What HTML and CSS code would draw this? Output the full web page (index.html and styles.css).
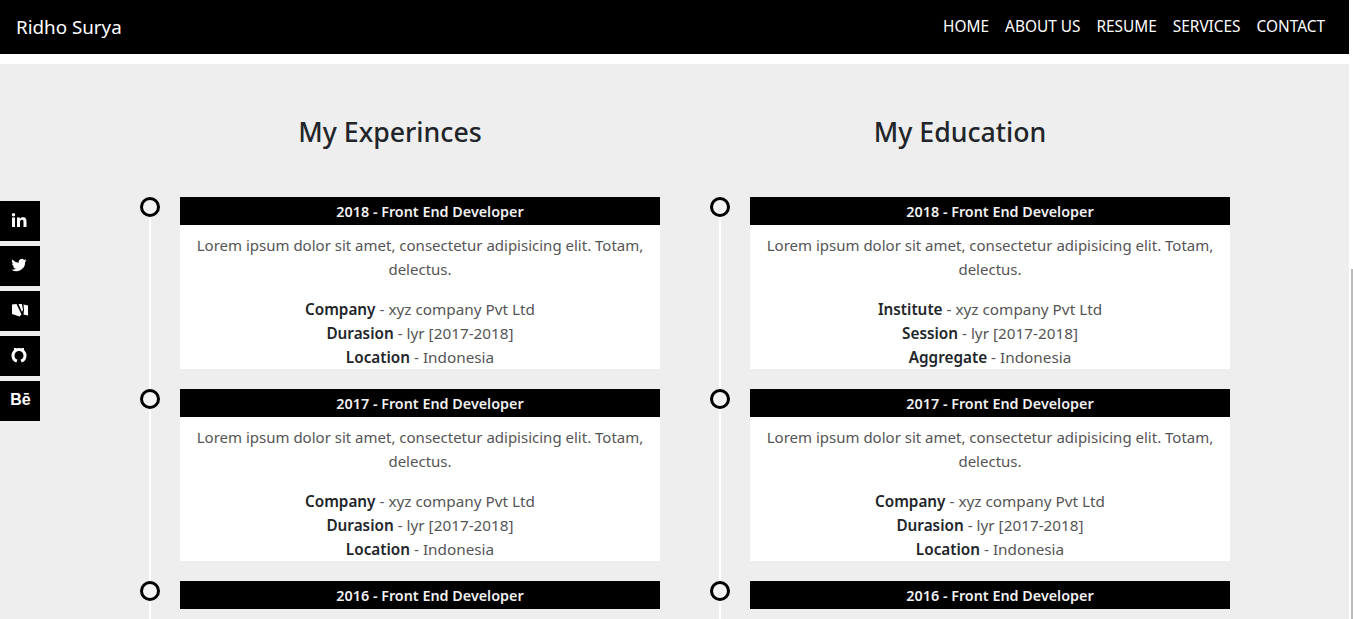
FILE: index.html
```html
<!DOCTYPE html>
<html lang="en">
<head>
<meta charset="utf-8">
<title>Ridho Surya</title>
<link rel="stylesheet" href="styles.css">
</head>
<body>
<div class="page">
  <header class="navbar">
    <a class="brand">Ridho Surya</a>
    <nav class="menu">
      <a>HOME</a><a>ABOUT US</a><a>RESUME</a><a>SERVICES</a><a>CONTACT</a>
    </nav>
  </header>
  <main class="resume">
    <div class="columns">
      <section class="column">
        <h2>My Experinces</h2>
        <article class="item">
          <h3>2018 - Front End Developer</h3>
          <p>Lorem ipsum dolor sit amet, consectetur adipisicing elit. Totam, delectus.</p>
          <ul><li><b>Company</b> - xyz company Pvt Ltd</li><li><b>Durasion</b> - lyr [2017-2018]</li><li><b>Location</b> - Indonesia</li></ul>
        </article>
        <article class="item">
          <h3>2017 - Front End Developer</h3>
          <p>Lorem ipsum dolor sit amet, consectetur adipisicing elit. Totam, delectus.</p>
          <ul><li><b>Company</b> - xyz company Pvt Ltd</li><li><b>Durasion</b> - lyr [2017-2018]</li><li><b>Location</b> - Indonesia</li></ul>
        </article>
        <article class="item">
          <h3>2016 - Front End Developer</h3>
        </article>
      </section>
      <section class="column">
        <h2>My Education</h2>
        <article class="item">
          <h3>2018 - Front End Developer</h3>
          <p>Lorem ipsum dolor sit amet, consectetur adipisicing elit. Totam, delectus.</p>
          <ul><li><b>Institute</b> - xyz company Pvt Ltd</li><li><b>Session</b> - lyr [2017-2018]</li><li><b>Aggregate</b> - Indonesia</li></ul>
        </article>
        <article class="item">
          <h3>2017 - Front End Developer</h3>
          <p>Lorem ipsum dolor sit amet, consectetur adipisicing elit. Totam, delectus.</p>
          <ul><li><b>Company</b> - xyz company Pvt Ltd</li><li><b>Durasion</b> - lyr [2017-2018]</li><li><b>Location</b> - Indonesia</li></ul>
        </article>
        <article class="item">
          <h3>2016 - Front End Developer</h3>
        </article>
      </section>
    </div>
  </main>
</div>
<aside class="social">
  <a><svg viewBox="0 0 16 16"><path d="M1 5.500h3V15H1zM2.500 1a1.700 1.700 0 1 1 0 3.400 1.700 1.700 0 0 1 0-3.400zM6 5.500h2.900v1.300c.5-.9 1.600-1.600 3-1.600 3 0 3.600 2 3.600 4.600V15h-3v-4.700c0-1.200 0-2.500-1.500-2.500S9 9 9 10.200V15H6z"/></svg></a>
  <a><svg viewBox="0 0 16 16"><path d="M15.500 3.300c-.6.3-1.200.4-1.800.5.6-.4 1.100-1 1.400-1.700-.6.4-1.300.6-2 .8A3.100 3.100 0 0 0 7.800 5.700 8.800 8.800 0 0 1 1.400 2.400a3.100 3.100 0 0 0 1 4.200c-.5 0-1-.2-1.400-.4 0 1.500 1.100 2.800 2.500 3.100-.5.100-.9.100-1.400.1.400 1.200 1.500 2.100 2.900 2.100A6.300 6.300 0 0 1 .5 12.800 8.800 8.800 0 0 0 14.100 5c.6-.4 1-1 1.400-1.700z"/></svg></a>
  <a><svg class="wide" viewBox="0 0 18 14"><path d="M1 1.500 5.500 1 10.500 11.500 8.500 13.500 1 11zM7.500 1h3.300L12 6.500l-1 2.500zM12.500 1.500 17 2.500V12.500L12.500 11.500l.5-4.500z"/></svg></a>
  <a><svg viewBox="0 0 16 16"><path class="ring" d="M5.900 14.200C3.500 13.300 2 11.100 2 8.500 2 5.200 4.700 2.500 8 2.500s6 2.700 6 6c0 2.600-1.500 4.800-3.900 5.700"/><path d="M3 1h2.500v3H3zM10.500 1H13v3h-2.500z"/></svg></a>
  <span class="be">Bē</span>
</aside>
<div class="thumb"></div>
</body>
</html>
```
FILE: styles.css
```css
*, *::before, *::after { box-sizing: border-box; }
html, body { margin: 0; height: 619px; overflow: hidden; background: #fff; }
body { font-family: "Noto Sans", "Open Sans", sans-serif; font-size: 15px; color: #212529; }
.page { width: 1349px; }
.navbar { height: 54px; background: #000; color: #fff; display: flex; align-items: center; justify-content: space-between; padding: 0 16px 1px; }
.brand { font-size: 18.800px; }
.menu { display: flex; gap: 16px; padding: 0 8px 0 0; font-size: 15.400px; }
.resume { margin-top: 10px; background: #eee; height: 555px; padding: 50px 105px 0; }
.columns { display: grid; grid-template-columns: 570px 570px; }
.column { padding: 0 15px; }
h2 { margin: 0 0 47px; text-align: center; font-size: 26.700px; line-height: 36px; font-weight: 500; color: #212529; }
.item { position: relative; margin-left: 60px; margin-bottom: 20px; background: #fff; text-align: center; }
.item::before { content: ""; position: absolute; left: -31px; top: 0; bottom: -20px; width: 2px; background: #fff; }
.item::after { content: ""; position: absolute; left: -40px; top: 0; width: 20px; height: 20px; border-radius: 50%; border: 3px solid #000; background: #f4f4f4; }
h3 { margin: 0; height: 28px; padding-left: 20px; line-height: 29px; background: #000; color: #f2f2f2; font-size: 14.350px; font-weight: 600; }
.item p { margin: 0; padding: 8px 15px 16px; line-height: 24px; color: #555; }
.item ul { list-style: none; margin: 0; padding: 0; font-size: 15.300px; line-height: 24px; color: #555; }
.item b { color: #212529; font-weight: 600; }
.social { position: fixed; left: 0; top: 201px; display: flex; flex-direction: column; gap: 5px; }
.social a, .social .be { width: 40px; height: 40px; background: #000; color: #fff; display: flex; align-items: center; justify-content: center; }
.social svg { width: 16px; height: 16px; fill: #fff; margin: -2px 2px 0 0; }
.social svg.wide { width: 18px; height: 14px; margin: -3px 0 0 0; }
.social .ring { fill: none; stroke: #fff; stroke-width: 3; }
.social .be { font-family: "Liberation Sans", sans-serif; font-weight: 700; font-size: 16px; padding: 0 0 3px 1px; }
.thumb { position: fixed; right: 0; top: 269px; width: 2px; height: 350px; background: #bbb; }
```
